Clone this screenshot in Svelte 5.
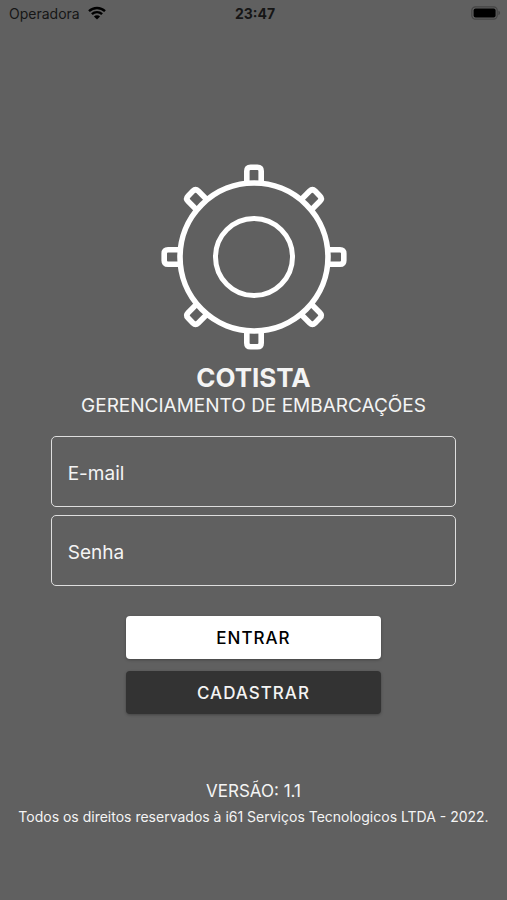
<script lang="ts">
	const teeth = [0, 45, 90, 135, 180, 225, 270, 315];

	let email = $state('');
	let password = $state('');

	function handleSubmit(event: SubmitEvent) {
		event.preventDefault();
	}
</script>

<div class="screen">
	<header class="status-bar">
		<div class="carrier">
			<span>Operadora</span>
			<svg class="wifi" viewBox="0 0 18 14" aria-hidden="true">
				<path d="M1 5.2a11.5 11.5 0 0 1 16 0" />
				<path d="M3.9 8.2a7.3 7.3 0 0 1 10.2 0" />
				<path class="dot" d="M9 13.6 5.9 10.5a4.4 4.4 0 0 1 6.2 0Z" />
			</svg>
		</div>
		<time>23:47</time>
		<svg class="battery" viewBox="0 0 30 14" aria-label="Bateria cheia" role="img">
			<rect class="shell" x="0.8" y="0.8" width="25.4" height="12.4" rx="3.6" />
			<rect x="2.6" y="2.6" width="22" height="8.8" rx="2" />
			<path class="tip" d="M27.4 4.8c2.2.6 2.2 3.8 0 4.4Z" />
		</svg>
	</header>

	<main>
		<svg class="logo" viewBox="-94 -94 188 188" aria-hidden="true">
			<circle r="74" />
			<circle class="hub" r="38.5" />
			{#each teeth as angle (angle)}
				<path
					transform="rotate({angle})"
					d="M-7.2-73V-86q0-3.8 3.8-3.8H3.4q3.8 0 3.8 3.8V-73"
				/>
			{/each}
		</svg>

		<h1>COTISTA</h1>
		<p class="subtitle">GERENCIAMENTO DE EMBARCAÇÕES</p>

		<form onsubmit={handleSubmit}>
			<input type="email" placeholder="E-mail" aria-label="E-mail" bind:value={email} />
			<input type="password" placeholder="Senha" aria-label="Senha" bind:value={password} />

			<div class="actions">
				<button type="submit" class="primary">ENTRAR</button>
				<button type="button" class="secondary">CADASTRAR</button>
			</div>
		</form>
	</main>

	<footer>
		<p class="version">VERSÃO: 1.1</p>
		<p class="rights">Todos os direitos reservados à i61 Serviços Tecnologicos LTDA - 2022.</p>
	</footer>
</div>

<style>
	:global(body) {
		margin: 0;
		background: #606060;
	}

	.screen {
		min-height: 100vh;
		box-sizing: border-box;
		background: #606060;
		color: #f4f4f4;
		font-family: Inter, 'Liberation Sans', sans-serif;
	}

	.status-bar {
		display: grid;
		grid-template-columns: 1fr auto 1fr;
		align-items: center;
		height: 26px;
		padding: 0 6px 0 9px;
		color: #161616;
		font-size: 14px;
	}

	.carrier {
		display: flex;
		align-items: center;
		gap: 8px;
	}

	.wifi {
		width: 18px;
		height: 14px;
		fill: none;
		stroke: #000;
		stroke-width: 2.4;
	}

	.wifi .dot {
		fill: #000;
		stroke: none;
	}

	time {
		font-weight: 700;
	}

	.battery {
		justify-self: end;
		width: 30px;
		height: 14px;
	}

	.battery .shell {
		fill: none;
		stroke: #444;
		stroke-width: 1.2;
	}

	.battery .tip {
		fill: #444;
	}

	main {
		display: flex;
		flex-direction: column;
		align-items: center;
		padding-top: 137px;
	}

	.logo {
		width: 188px;
		height: 188px;
		fill: none;
		stroke: #fff;
		stroke-width: 5.6;
	}

	.logo .hub {
		stroke-width: 5;
	}

	h1 {
		margin: 11px 0 0;
		font-size: 26px;
		font-weight: 700;
		line-height: 32px;
	}

	p {
		margin: 0;
	}

	.subtitle {
		font-size: 19px;
		line-height: 24px;
	}

	form {
		display: flex;
		flex-direction: column;
		gap: 8px;
		width: 80%;
		margin-top: 18px;
	}

	input {
		box-sizing: border-box;
		width: 100%;
		height: 71px;
		padding: 3px 16px 0;
		border: 1px solid #dedede;
		border-radius: 5px;
		background: transparent;
		color: #f4f4f4;
		font: inherit;
		font-size: 19px;
	}

	input::placeholder {
		color: #f4f4f4;
		opacity: 1;
	}

	.actions {
		display: flex;
		flex-direction: column;
		align-items: center;
		gap: 12px;
		margin-top: 22px;
	}

	button {
		width: 63%;
		height: 43px;
		padding: 0;
		border: 0;
		border-radius: 4px;
		box-shadow: 0 1px 3px rgba(0, 0, 0, 0.3);
		font: inherit;
		font-size: 17px;
		font-weight: 500;
		letter-spacing: 1px;
		cursor: pointer;
	}

	.primary {
		background: #fff;
		color: #000;
	}

	.secondary {
		background: #333;
		color: #f4f4f4;
	}

	footer {
		margin-top: 64px;
		text-align: center;
	}

	.version {
		font-size: 17px;
		line-height: 26px;
	}

	.rights {
		font-size: 14px;
		line-height: 26px;
	}
</style>
